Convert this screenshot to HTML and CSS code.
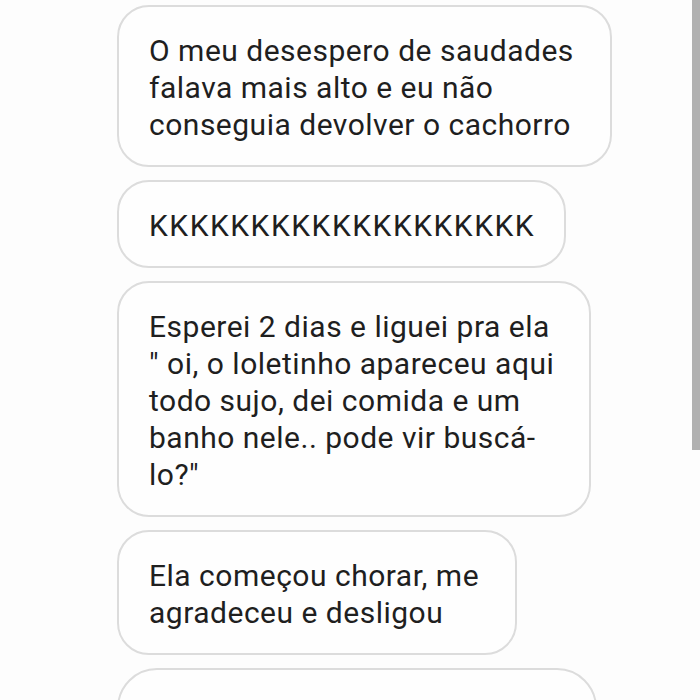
FILE: index.html
```html
<!DOCTYPE html>
<html lang="pt">
<head>
<meta charset="utf-8">
<link rel="stylesheet" href="styles.css">
</head>
<body>
<div class="chat">
  <div class="bubble b1">O meu desespero de saudades<br>falava mais alto e eu não<br>conseguia devolver o cachorro</div>
  <div class="bubble b2">KKKKKKKKKKKKKKKKKKK</div>
  <div class="bubble b3">Esperei 2 dias e liguei pra ela<br>" oi, o loletinho apareceu aqui<br>todo sujo, dei comida e um<br>banho nele.. pode vir buscá-<br>lo?"</div>
  <div class="bubble b4">Ela começou chorar, me<br>agradeceu e desligou</div>
  <div class="bubble b5">&nbsp;</div>
</div>
<div class="scrollbar"></div>
</body>
</html>
```
FILE: styles.css
```css
html, body {
  margin: 0;
  padding: 0;
  background: #fdfdfd;
  height: 700px;
  overflow: hidden;
}
.chat {
  display: flex;
  flex-direction: column;
  align-items: flex-start;
  gap: 13px;
  padding: 5px 0 0 117px;
}
.bubble {
  box-sizing: border-box;
  border: 2px solid #dcdcdc;
  border-radius: 32px;
  background: #fefefe;
  padding: 25px 10px 22px 30px;
  font-family: Roboto, "Noto Sans", sans-serif;
  font-size: 30px;
  letter-spacing: 0.5px;
  line-height: 37px;
  color: #1f1f1f;
  white-space: nowrap;
}
.b1 { width: 495px; }
.b2 { width: 449px; letter-spacing: 1.5px; }
.b3 { width: 474px; }
.b4 { width: 400px; }
.b5 { width: 480px; height: 120px; border-radius: 40px; }
.scrollbar {
  position: fixed;
  top: 0;
  right: 0;
  width: 8px;
  height: 450px;
  background: #b1b1b1;
}
```
